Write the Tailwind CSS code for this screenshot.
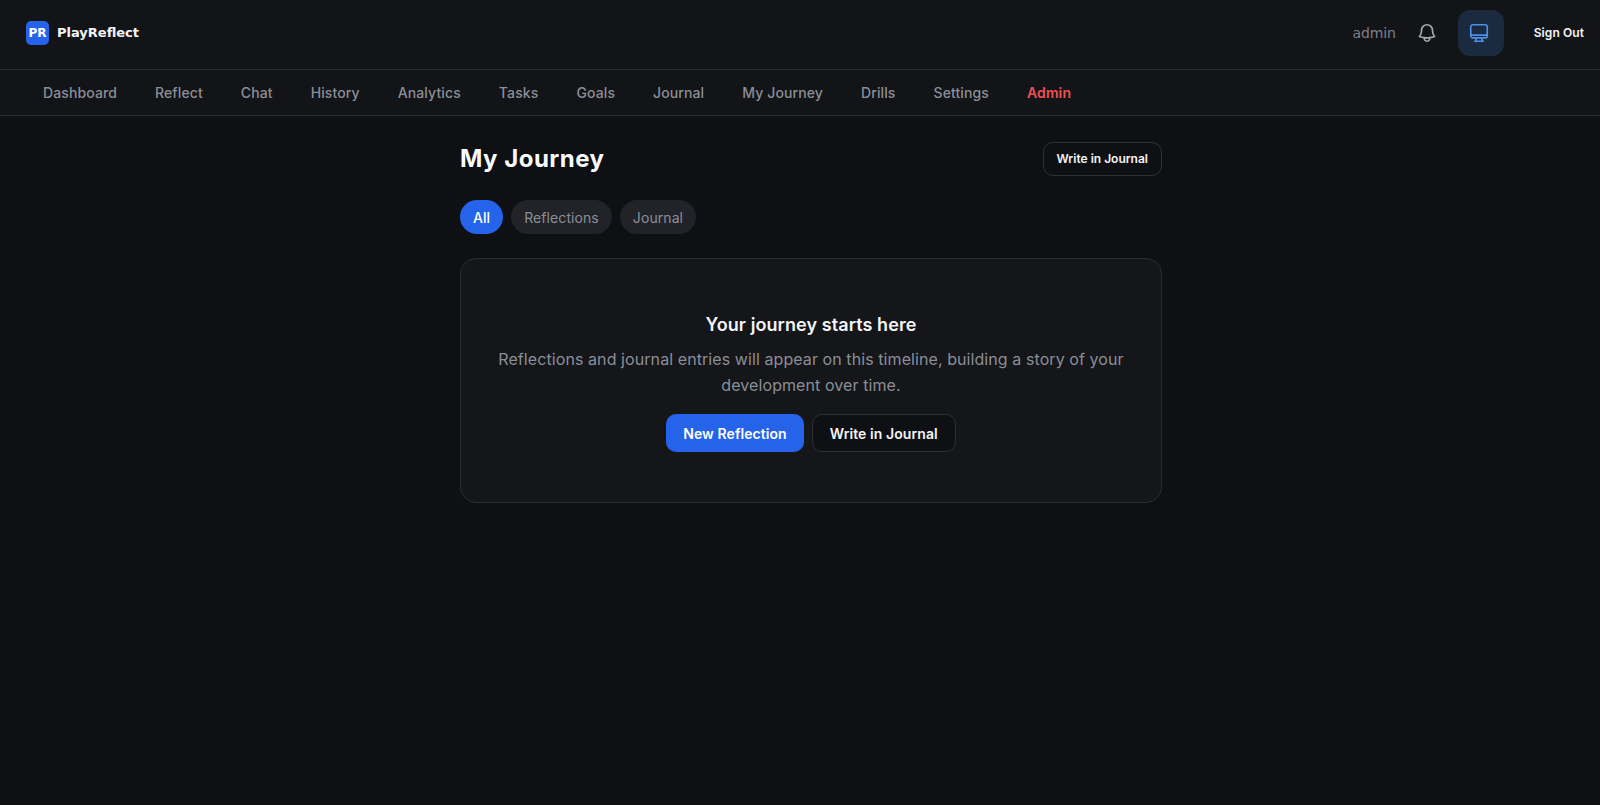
<!DOCTYPE html>
<html lang="en">
<head>
    <meta charset="UTF-8">
    <meta name="viewport" content="width=device-width, initial-scale=1.0">
    <title>PlayReflect - My Journey</title>
    <script src="https://cdn.jsdelivr.net/npm/@tailwindcss/browser@4"></script>
</head>
<body class="min-h-screen bg-[#0e1014] text-white tracking-[0.005em] font-['Inter',sans-serif]">
    <header class="h-[70px] flex items-center justify-between pl-[26px] pr-4 pb-[3px] bg-[#131418] border-b border-[#2b2d32]">
        <div class="flex items-center gap-2">
            <div class="w-[23px] h-[24px] rounded-[5px] bg-[#2563eb] flex items-center justify-center text-[12px] font-bold tracking-normal font-['DejaVu_Sans',sans-serif]">PR</div>
            <span class="text-[13px] font-bold tracking-normal font-['DejaVu_Sans',sans-serif] text-[#f3f4f6]">PlayReflect</span>
        </div>
        <div class="flex items-center">
            <span class="text-[14px] tracking-[-0.01em] text-[#7d8087] font-['DejaVu_Sans',sans-serif] mr-[20px]">admin</span>
            <svg class="w-[22px] h-[22px] text-[#a8aaaf] mr-[20px]" viewBox="0 0 24 24" fill="none" stroke="currentColor" stroke-width="1.8" stroke-linecap="round" stroke-linejoin="round"><path d="M14.857 17.082a23.848 23.848 0 005.454-1.31A8.967 8.967 0 0118 9.75v-.7V9A6 6 0 006 9v.75a8.967 8.967 0 01-2.312 6.022c1.733.64 3.56 1.085 5.455 1.31m5.714 0a24.255 24.255 0 01-5.714 0m5.714 0a3 3 0 11-5.714 0"/></svg>
            <div class="w-[46px] h-[46px] rounded-xl bg-[#1b2a3f] flex items-center justify-center pr-1 mr-[30px]">
                <svg class="w-[22px] h-[22px] text-[#4b8fe8]" viewBox="0 0 24 24" fill="none" stroke="currentColor" stroke-width="1.8" stroke-linecap="round" stroke-linejoin="round"><path d="M9 17.25v1.007a3 3 0 01-.879 2.122L7.5 21h9l-.621-.621A3 3 0 0115 18.257V17.25m6-12V15a2.25 2.25 0 01-2.25 2.25H5.25A2.25 2.25 0 013 15V5.25m18 0A2.25 2.25 0 0018.75 3H5.25A2.25 2.25 0 003 5.25m18 0V12a2.25 2.25 0 01-2.25 2.25H5.25A2.25 2.25 0 013 12V5.25"/></svg>
            </div>
            <span class="text-[12px] font-semibold text-[#f3f4f6]">Sign Out</span>
        </div>
    </header>
    <nav class="h-[46px] flex items-center pl-[43px] gap-[38px] bg-[#131418] border-b border-[#2b2d32] text-[14px] font-medium tracking-[0.008em] text-[#8b8e96]">
        <a>Dashboard</a>
        <a>Reflect</a>
        <a>Chat</a>
        <a>History</a>
        <a>Analytics</a>
        <a>Tasks</a>
        <a>Goals</a>
        <a>Journal</a>
        <a>My Journey</a>
        <a>Drills</a>
        <a>Settings</a>
        <a class="font-semibold text-[#f04f54]">Admin</a>
    </nav>
    <main class="w-[702px] ml-[460px] pt-[25px]">
        <div class="flex items-center justify-between">
            <h1 class="text-[24px] font-bold tracking-[0.02em] text-[#f9fafb]">My Journey</h1>
            <button class="h-[34px] px-[13px] rounded-[10px] border border-[#2f3137] bg-[#0e1014] text-[12px] font-semibold tracking-normal text-[#f3f4f6]">Write in Journal</button>
        </div>
        <div class="flex gap-2 mt-[23px]">
            <button class="h-[34px] px-[13px] rounded-full bg-[#2563eb] text-[14px] font-medium text-white">All</button>
            <button class="h-[34px] px-[13px] rounded-full bg-[#212329] text-[14px] text-[#8b8e96]">Reflections</button>
            <button class="h-[34px] px-[13px] rounded-full bg-[#212329] text-[14px] text-[#8b8e96]">Journal</button>
        </div>
        <section class="mt-[24px] h-[245px] rounded-2xl border border-[#2b2d32] bg-[#14161a] flex flex-col items-center pt-[52px]">
            <h2 class="text-[18px] font-semibold text-[#f3f4f6]">Your journey starts here</h2>
            <p class="mt-[8px] w-[640px] text-center text-[16px] leading-[26px] text-[#8b8e96]">Reflections and journal entries will appear on this timeline, building a story of your development over time.</p>
            <div class="flex gap-2 mt-4">
                <button class="h-[38px] px-[17px] rounded-[10px] bg-[#2563eb] text-[14px] font-semibold text-white">New Reflection</button>
                <button class="h-[38px] px-[17px] rounded-[10px] border border-[#2f3137] bg-[#0e1014] text-[14px] font-semibold text-[#f3f4f6]">Write in Journal</button>
            </div>
        </section>
    </main>
</body>
</html>
